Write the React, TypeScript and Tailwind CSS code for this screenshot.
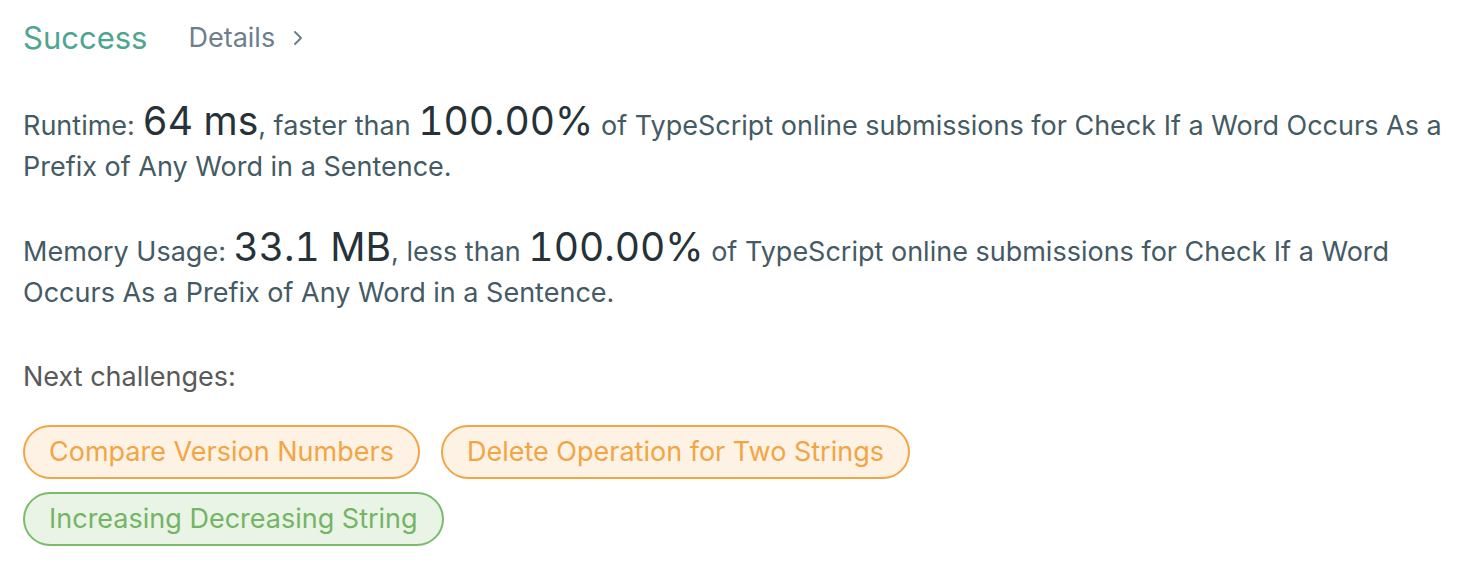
import React from "react";

const Big = ({ children }: { children: React.ReactNode }) => (
  <span className="text-[39px] leading-[0] tabular-nums text-[#263238]">{children}</span>
);

const Tag = ({ label, tone }: { label: string; tone: "orange" | "green" }) => (
  <span
    className={
      tone === "orange"
        ? "inline-flex h-[54px] items-center rounded-full border-2 border-[#f2a545] bg-[#fdf2e3] px-[24px] text-[27px] text-[#f2a545]"
        : "inline-flex h-[54px] items-center rounded-full border-2 border-[#7abb6c] bg-[#e9f4e6] px-[24px] text-[27px] text-[#74b465]"
    }
  >
    {label}
  </span>
);

export default function App() {
  return (
    <div className="h-[564px] w-[1478px] bg-white px-[23px] font-['Inter','Liberation_Sans',sans-serif]">
      <div className="flex items-center pt-[18px] leading-[40px]">
        <span className="text-[31px] text-[#4ea590]">Success</span>
        <span className="ml-[41px] flex items-center text-[27px] text-[#6b808c]">
          Details
          <svg className="ml-[18px]" width="10" height="16" viewBox="0 0 10 16" fill="none">
            <path d="M2 2l6 6-6 6" stroke="#6b808c" strokeWidth="2" strokeLinecap="round" strokeLinejoin="round" />
          </svg>
        </span>
      </div>
      <p className="mt-[47px] text-[27px] leading-[41px] text-[#455a64]">
        Runtime: <Big>64 ms</Big>, faster than <Big>100.00%</Big> of TypeScript online submissions for Check If a
        Word Occurs As a Prefix of Any Word in a Sentence.
      </p>
      <p className="mt-[44px] text-[27px] leading-[41px] text-[#455a64]">
        Memory Usage: <Big>33.1 MB</Big>, less than <Big>100.00%</Big> of TypeScript online submissions for Check
        If a Word Occurs As a Prefix of Any Word in a Sentence.
      </p>
      <p className="mt-[43px] text-[27px] leading-[41px] text-[#595959]">Next challenges:</p>
      <div className="mt-[28px] flex max-w-[1000px] flex-wrap gap-x-[21px] gap-y-[13px]">
        <Tag label="Compare Version Numbers" tone="orange" />
        <Tag label="Delete Operation for Two Strings" tone="orange" />
        <Tag label="Increasing Decreasing String" tone="green" />
      </div>
    </div>
  );
}
